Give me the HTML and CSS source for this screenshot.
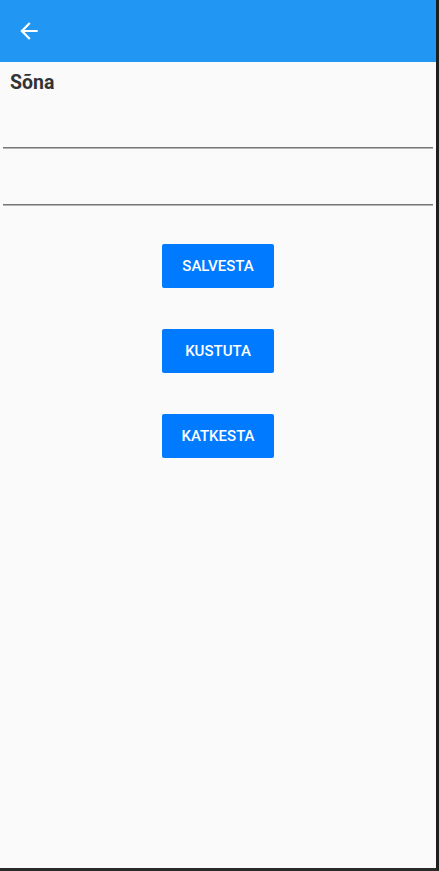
FILE: index.html
```html
<!DOCTYPE html>
<html lang="et">
<head>
<meta charset="utf-8">
<link rel="stylesheet" href="styles.css">
</head>
<body>
<div class="screen">
  <header class="appbar">
    <button class="back" aria-label="Tagasi">
      <svg viewBox="0 0 24 24" width="26" height="26"><path d="M20 11H7.83l5.59-5.59L12 4l-8 8 8 8 1.41-1.41L7.83 13H20v-2z" fill="#fff"/></svg>
    </button>
  </header>
  <main class="content">
    <div class="label">Sõna</div>
    <div class="fields">
      <div class="field"></div>
      <div class="field"></div>
    </div>
    <div class="actions">
      <button class="btn">SALVESTA</button>
      <button class="btn">KUSTUTA</button>
      <button class="btn">KATKESTA</button>
    </div>
  </main>
</div>
</body>
</html>
```
FILE: styles.css
```css
html, body {
  margin: 0;
  padding: 0;
  background: #fafafa;
}
.screen {
  box-sizing: border-box;
  width: 439px;
  height: 871px;
  background: #fafafa;
  border-right: 3px solid #1e1e1e;
  border-bottom: 3px solid #2a2a2a;
  font-family: Roboto, "Liberation Sans", sans-serif;
  display: flex;
  flex-direction: column;
}
.appbar {
  height: 62px;
  background: #2196f3;
  display: flex;
  align-items: center;
  padding-left: 16px;
  flex-shrink: 0;
}
.back {
  background: none;
  border: 0;
  padding: 0;
  width: 26px;
  height: 26px;
  margin-top: -1px;
  display: flex;
}
.content {
  display: flex;
  flex-direction: column;
}
.label {
  padding: 9px 0 0 10px;
  font-size: 19.5px;
  font-weight: 700;
  color: #333;
  line-height: 23px;
}
.fields {
  display: flex;
  flex-direction: column;
  margin: 0 3px;
}
.field {
  height: 56px;
  border-bottom: 1px solid #777;
  box-shadow: 0 1px 0 #b5b5b5;
}
.field:first-child {
  height: 53px;
}
.actions {
  display: flex;
  flex-direction: column;
  align-items: center;
  gap: 40px;
  padding-top: 39px;
}
.btn {
  width: 112px;
  height: 44px;
  background: #007bff;
  color: #fff;
  border: 0;
  border-radius: 2px;
  font-family: Roboto, "Liberation Sans", sans-serif;
  font-size: 15px;
  font-weight: 500;
  padding: 0;
}
.btn + .btn {
  margin-top: 1px;
}
```
